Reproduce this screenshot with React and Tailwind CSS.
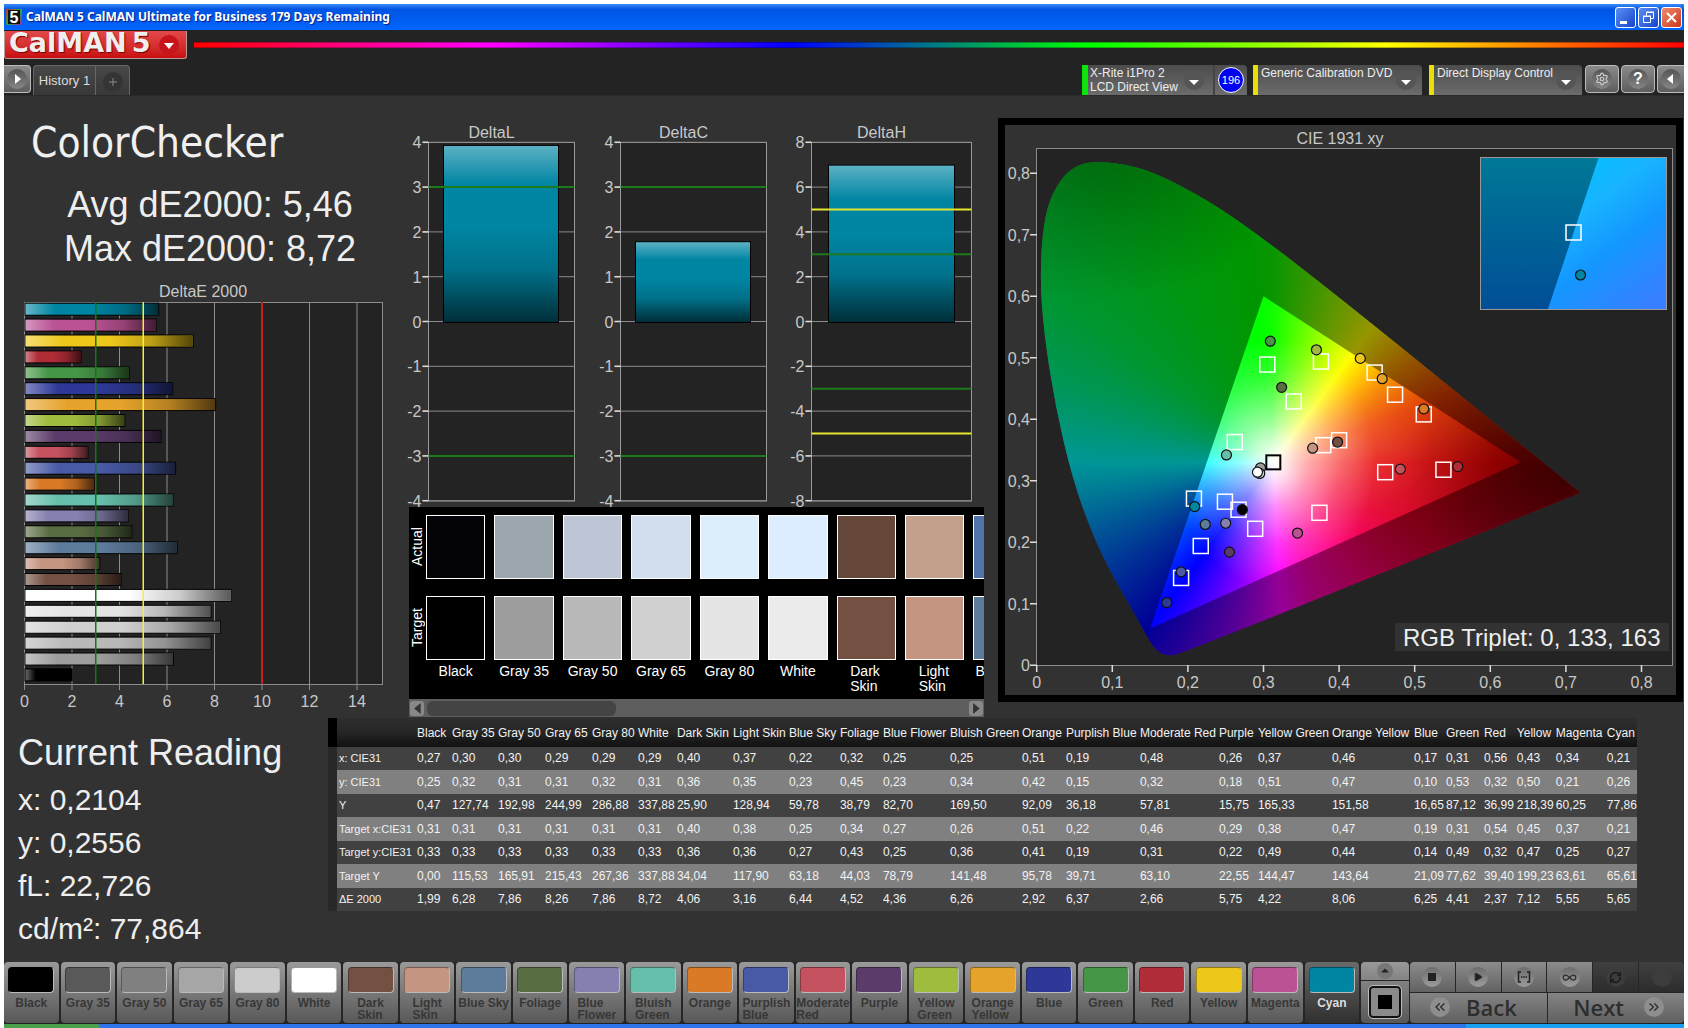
import { useState } from "react";
import {
  Play,
  Settings,
  Infinity as InfinityIcon,
  RefreshCw,
  ChevronsLeft,
  ChevronsRight,
} from "lucide-react";

// name, color, x, y, Y, target x, target y, target Y, dE2000, table column width
const PATCHES = [
  ["Black", "#000000", "0,27", "0,25", "0,47", "0,31", "0,33", "0,00", 1.99, 35],
  ["Gray 35", "#9d9d9d", "0,30", "0,32", "127,74", "0,31", "0,33", "115,53", 6.28, 46],
  ["Gray 50", "#b9b9b9", "0,30", "0,31", "192,98", "0,31", "0,33", "165,91", 7.86, 47],
  ["Gray 65", "#d0d0d0", "0,29", "0,31", "244,99", "0,31", "0,33", "215,43", 8.26, 47],
  ["Gray 80", "#e5e5e5", "0,29", "0,32", "286,88", "0,31", "0,33", "267,36", 7.86, 46],
  ["White", "#ffffff", "0,29", "0,31", "337,88", "0,31", "0,33", "337,88", 8.72, 39],
  ["Dark Skin", "#735041", "0,40", "0,36", "25,90", "0,40", "0,36", "34,04", 4.06, 56],
  ["Light Skin", "#c49580", "0,37", "0,35", "128,94", "0,38", "0,36", "117,90", 3.16, 56],
  ["Blue Sky", "#5d7b9b", "0,22", "0,23", "59,78", "0,25", "0,27", "63,18", 6.44, 51],
  ["Foliage", "#596d42", "0,32", "0,45", "38,79", "0,34", "0,43", "44,03", 4.52, 43],
  ["Blue Flower", "#8480b0", "0,25", "0,23", "82,70", "0,27", "0,25", "78,79", 4.36, 67],
  ["Bluish Green", "#66bfaa", "0,25", "0,34", "169,50", "0,26", "0,36", "141,48", 6.26, 72],
  ["Orange", "#da7a27", "0,51", "0,42", "92,09", "0,51", "0,41", "95,78", 2.92, 44],
  ["Purplish Blue", "#4859a6", "0,19", "0,15", "36,18", "0,22", "0,19", "39,71", 6.37, 74],
  ["Moderate Red", "#c4525f", "0,48", "0,32", "57,81", "0,46", "0,31", "63,10", 2.66, 79],
  ["Purple", "#5b3b69", "0,26", "0,18", "15,75", "0,29", "0,22", "22,55", 5.75, 39],
  ["Yellow Green", "#a0bc3e", "0,37", "0,51", "165,33", "0,38", "0,49", "144,47", 4.22, 74],
  ["Orange Yellow", "#e6a32b", "0,46", "0,47", "151,58", "0,47", "0,44", "143,64", 8.06, 82],
  ["Blue", "#2e3997", "0,17", "0,10", "16,65", "0,19", "0,14", "21,09", 6.25, 32],
  ["Green", "#469647", "0,31", "0,53", "87,12", "0,31", "0,49", "77,62", 4.41, 38],
  ["Red", "#b02d37", "0,56", "0,32", "36,99", "0,54", "0,32", "39,40", 2.37, 33],
  ["Yellow", "#edc81b", "0,43", "0,50", "218,39", "0,45", "0,47", "199,23", 7.12, 39],
  ["Magenta", "#ba5293", "0,34", "0,21", "60,25", "0,37", "0,25", "63,61", 5.55, 51],
  ["Cyan", "#0085a3", "0,21", "0,26", "77,86", "0,21", "0,27", "65,61", 5.65, 32],
];

// the pattern pads use the darker gray steps
const PAD_COLORS = {
  "Gray 35": "#595959",
  "Gray 50": "#808080",
  "Gray 65": "#a6a6a6",
  "Gray 80": "#cccccc",
};

const TABLE_ROWS = [
  ["x: CIE31", 2],
  ["y: CIE31", 3],
  ["Y", 4],
  ["Target x:CIE31", 5],
  ["Target y:CIE31", 6],
  ["Target Y", 7],
  ["ΔE 2000", 8],
];

const COMPARE = [
  ["Black", "#030308", "#000000"],
  ["Gray 35", "#9ba7ac", "#9d9d9d"],
  ["Gray 50", "#bec6d6", "#b9b9b9"],
  ["Gray 65", "#d2deee", "#d0d0d0"],
  ["Gray 80", "#dceefb", "#e5e5e5"],
  ["White", "#dcedff", "#ebebeb"],
  ["Dark Skin", "#654739", "#735041"],
  ["Light Skin", "#c3a08c", "#c49580"],
  ["Blue Sky", "#4f74aa", "#5d7b9b"],
];

const format = (n) => n.toFixed(2).replace(".", ",");

/* ---------- title bar and header ---------- */

function TitleBar() {
  return (
    <div className="flex h-[26px] items-center gap-1 bg-linear-to-b from-[#3a8cf8] via-[#0054e3] via-20% to-[#0066ff] px-[2px]">
      <svg viewBox="0 0 16 16" className="size-4">
        <defs>
          <linearGradient id="appIcon" x1="0" y1="0" x2="1" y2="1">
            <stop offset="0" stopColor="#c33" />
            <stop offset=".5" stopColor="#2a4" />
            <stop offset="1" stopColor="#a2a" />
          </linearGradient>
        </defs>
        <rect width="16" height="16" fill="url(#appIcon)" />
        <rect x="2" y="1" width="12" height="14" fill="#111" />
        <text x="8" y="14" textAnchor="middle" fontSize="16" fontWeight="700" fill="#fff" fontFamily="Liberation Sans, sans-serif">
          5
        </text>
      </svg>
      <span className="grow font-['Noto_Sans',sans-serif] text-[12px] font-bold text-white [text-shadow:1px_1px_1px_#0a1883]">
        CalMAN 5 CalMAN Ultimate for Business 179 Days Remaining
      </span>
      <div className="flex gap-[2px]">
        <button aria-label="Minimize" className="size-[21px] rounded-[3px] border border-white bg-linear-to-br from-[#5b8ff5] to-[#1941c8]">
          <svg viewBox="0 0 19 19">
            <rect x="4" y="13" width="7" height="3" fill="#fff" />
          </svg>
        </button>
        <button aria-label="Restore" className="size-[21px] rounded-[3px] border border-white bg-linear-to-br from-[#5b8ff5] to-[#1941c8]">
          <svg viewBox="0 0 19 19" fill="none" stroke="#fff">
            <path d="M7.500 7.500V4.500h7v6h-3M7 4h8M4.500 8.500h7v6h-7zM4 8h8" />
          </svg>
        </button>
        <button aria-label="Close" className="size-[21px] rounded-[3px] border border-white bg-linear-to-br from-[#f08a6c] to-[#c8341a]">
          <svg viewBox="0 0 19 19" fill="none" stroke="#fff" strokeWidth="2">
            <path d="M5 5l9 9M14 5l-9 9" />
          </svg>
        </button>
      </div>
    </div>
  );
}

function DropCircle() {
  return (
    <svg viewBox="0 0 20 20" className="size-5">
      <circle cx="10" cy="10" r="10" fill="#555" />
      <path d="M5 10h10l-5 5z" fill="#fff" />
    </svg>
  );
}

function SourceSelect({ label, value, className }) {
  return (
    <div className={`relative h-[30px] rounded-tr-[4px] border-l-[5px] border-[#e8e000] bg-linear-to-b from-[#4c4c4c] to-[#6c6c6c] ${className}`}>
      <select
        aria-label={label}
        defaultValue={value}
        className="block h-[16px] w-full appearance-none bg-transparent pl-[3px] text-[12px] leading-4 text-[#eee]"
      >
        <option>{value}</option>
      </select>
      <span className="pointer-events-none absolute top-[5px] right-[6px]">
        <DropCircle />
      </span>
    </div>
  );
}

function RoundButton({ label, children, className = "w-[34px]" }) {
  return (
    <button
      aria-label={label}
      className={`flex h-[28px] items-center justify-center rounded-[4px] border border-[#bbb] bg-linear-to-b from-[#8a8a8a] to-[#5e5e5e] ${className}`}
    >
      <span className="flex size-5 items-center justify-center rounded-full bg-linear-to-b from-[#555] to-[#868686] text-white">
        {children}
      </span>
    </button>
  );
}

function Header() {
  return (
    <header className="border-b border-[#2a2a2a] bg-[#232323]">
      <div className="flex h-[35px] items-start gap-[7px] pt-px">
        <button
          aria-label="CalMAN 5 menu"
          className="flex h-[28px] w-[183px] items-center rounded-b-[3px] border-x border-b border-[#b99] bg-linear-to-b from-[#e34848] to-[#c80c10] pl-1 font-['DejaVu_Sans',sans-serif] text-[27px] leading-[24px] font-bold text-[#f1eeee] [text-shadow:1px_1px_1px_#700]"
        >
          <span className="-mt-1">CalMAN</span>
          <span className="-mt-1 ml-[5px]">5</span>
          <svg viewBox="0 0 20 20" className="ml-[9px] size-5">
            <circle cx="10" cy="10" r="10" fill="#c8141c" />
            <path d="M5 8h10l-5 6z" fill="#fff" />
          </svg>
        </button>
        <div className="mt-[11px] h-[6px] grow border-y border-black/30 bg-[linear-gradient(90deg,#f00,#f0f_20%,#00f_40%,#0f0_60%,#ff0_80%,#f00)]" />
      </div>

      <div className="flex h-[30px] items-start">
        <RoundButton label="Expand" className="w-[27px] rounded-l-none border-l-0">
          <svg viewBox="0 0 20 20">
            <path d="M8 5v10l6-5z" fill="#fff" />
          </svg>
        </RoundButton>
        <div className="ml-[2px] flex h-[30px] rounded-t-[4px] border border-b-0 border-[#666] bg-linear-to-b from-[#484848] to-[#383838]">
          <button className="w-[62px] border-r border-[#666] pt-px text-[13px] text-[#ddd]">History 1</button>
          <button aria-label="Add history" className="flex w-[33px] items-center justify-center pt-[2px]">
            <svg viewBox="0 0 20 20" className="size-5">
              <circle cx="10" cy="10" r="10" fill="#343434" />
              <path d="M10 6v8M6 10h8" stroke="#888" />
            </svg>
          </button>
        </div>

        <div className="grow" />

        <div className="flex h-[30px] w-[165px] rounded-tr-[4px] border-l-[6px] border-[#0ae40a] bg-linear-to-b from-[#4c4c4c] to-[#6c6c6c]">
          <button className="flex grow items-center justify-between border-r-2 border-[#444] pr-[9px] pl-[2px] text-left text-[12px] leading-[14px] text-[#eee]">
            <span>
              X-Rite i1Pro 2
              <br />
              LCD Direct View
            </span>
            <DropCircle />
          </button>
          <div className="flex w-[32px] items-center justify-center">
            <span className="flex size-[26px] items-center justify-center rounded-full border border-white bg-[#0000f4] text-[11px] text-white">
              196
            </span>
          </div>
        </div>
        <SourceSelect label="Source" value="Generic Calibration DVD" className="ml-[6px] w-[169px]" />
        <SourceSelect label="Display" value="Direct Display Control" className="ml-[7px] w-[153px]" />
        <div className="ml-[3px] flex gap-[2px]">
          <RoundButton label="Settings">
            <Settings size={14} color="#ccc" />
          </RoundButton>
          <RoundButton label="Help">
            <span className="text-[16px] font-bold">?</span>
          </RoundButton>
          <RoundButton label="Collapse" className="w-[27px] rounded-r-none border-r-0">
            <svg viewBox="0 0 20 20">
              <path d="M12 5v10l-6-5z" fill="#fff" />
            </svg>
          </RoundButton>
        </div>
      </div>
    </header>
  );
}

/* ---------- charts ---------- */

function DeltaEChart() {
  const unit = 23.75;
  const bars = [...PATCHES].reverse();
  return (
    <svg viewBox="0 0 400 432" className="w-full text-[16px]" fill="#c8c8c8">
      <defs>
        <linearGradient id="shadeX">
          <stop offset="0" stopColor="#fff" stopOpacity=".4" />
          <stop offset=".22" stopColor="#fff" stopOpacity="0" />
          <stop offset=".5" stopColor="#000" stopOpacity="0" />
          <stop offset=".75" stopColor="#000" stopOpacity=".2" />
          <stop offset="1" stopColor="#000" stopOpacity=".65" />
        </linearGradient>
      </defs>
      <text x="199" y="15" textAnchor="middle">DeltaE 2000</text>
      <rect x="20.500" y="20.500" width="358" height="382" fill="#232323" stroke="#8c8c8c" />
      {[0, 2, 4, 6, 8, 10, 12, 14].map((v) => (
        <g key={v}>
          <path d={`M${20.5 + v * unit} 20v388`} stroke="#8c8c8c" />
          <text x={20.5 + v * unit} y="425" textAnchor="middle">{v}</text>
        </g>
      ))}
      {bars.map((p, i) => (
        <g key={p[0]}>
          <rect x="21" y={21.2 + i * 15.9} width={p[8] * 23.65} height="12" fill={p[1]} stroke="#000" />
          <rect x="21.500" y={21.7 + i * 15.9} width={p[8] * 23.65 - 1} height="11" fill="url(#shadeX)" />
        </g>
      ))}
      <path d={`M${20.5 + 3 * unit} 20v382`} stroke="#0f7a0f" strokeWidth="1.500" />
      <path d={`M${20.5 + 5 * unit} 20v382`} stroke="#f2f23a" strokeWidth="1.500" />
      <path d={`M${20.5 + 10 * unit} 20v382`} stroke="#c81e1e" strokeWidth="2" />
    </svg>
  );
}

function DeltaPlot({ title, left, width, max, value, barX, barWidth, greens, yellows = [] }) {
  const zero = 199.5;
  const step = 44.8;
  const scale = step / (max / 4);
  const top = zero - value * scale;
  return (
    <g>
      <text x={left + width / 2 - 10} y="16" textAnchor="middle">{title}</text>
      <rect x={left} y="20.500" width={width} height="358.500" fill="#232323" stroke="#9a9a9a" />
      {[4, 3, 2, 1, 0, -1, -2, -3, -4].map((n) => (
        <g key={n}>
          <path d={`M${left - 6} ${zero - n * step}h${width + 6}`} stroke="#8c8c8c" />
          <path d={`M${left - 6} ${zero - n * step}h6`} stroke="#ddd" strokeWidth="1.500" />
          <text x={left - 7} y={zero + 6 - n * step} textAnchor="end">{(n * max) / 4}</text>
        </g>
      ))}
      <rect x={barX} y={top} width={barWidth} height={zero - top + 1} fill="#0085a3" stroke="#000" />
      <rect x={barX + 0.5} y={top + 0.5} width={barWidth - 1} height={zero - top} fill="url(#shadeY)" />
      {greens.map((g) => (
        <path key={g} d={`M${left} ${zero - g * scale}h${width}`} stroke="#1c7a1c" strokeWidth="2" />
      ))}
      {yellows.map((g) => (
        <path key={g} d={`M${left} ${zero - g * scale}h${width}`} stroke="#e6e62e" strokeWidth="2" />
      ))}
    </g>
  );
}

function DeltaCharts() {
  return (
    <svg viewBox="0 0 584 385" className="w-full text-[16px]" fill="#c8c8c8">
      <defs>
        <linearGradient id="shadeY" x1="0" y1="0" x2="0" y2="1">
          <stop offset="0" stopColor="#fff" stopOpacity=".36" />
          <stop offset=".22" stopColor="#fff" stopOpacity="0" />
          <stop offset=".45" stopColor="#000" stopOpacity="0" />
          <stop offset=".7" stopColor="#000" stopOpacity=".15" />
          <stop offset="1" stopColor="#000" stopOpacity=".65" />
        </linearGradient>
      </defs>
      <DeltaPlot title="DeltaL" left={24.5} width={146} max={4} value={3.93} barX={39.5} barWidth={115} greens={[3, -3]} />
      <DeltaPlot title="DeltaC" left={216.5} width={146} max={4} value={1.78} barX={231.5} barWidth={115} greens={[3, -3]} />
      <DeltaPlot title="DeltaH" left={407.5} width={160} max={8} value={6.98} barX={424.5} barWidth={126} greens={[3, -3]} yellows={[5, -5]} />
    </svg>
  );
}

function SwatchCompare() {
  return (
    <div className="mr-1 ml-[5px]">
      <div className="flex h-[192px] overflow-hidden bg-black pt-2 text-[14px] leading-[15px] text-white">
        <div className="flex w-[17px] shrink-0 flex-col items-center gap-[17px]">
          <span className="h-16 rotate-180 text-center [writing-mode:vertical-rl]">Actual</span>
          <span className="h-16 rotate-180 text-center [writing-mode:vertical-rl]">Target</span>
        </div>
        {COMPARE.map(([name, actual, target]) => (
          <div key={name} className="flex w-[11.9%] shrink-0 flex-col gap-[17px] pr-[9px]">
            <div className="h-16 border border-white" style={{ backgroundColor: actual }} />
            <div className="h-16 border border-white" style={{ backgroundColor: target }} />
            <div className="-mt-[13px] flex justify-center">
              <span className={name.endsWith("Skin") ? "w-8" : "whitespace-nowrap"}>{name}</span>
            </div>
          </div>
        ))}
      </div>
      <div className="flex h-[18px] items-center gap-[3px] bg-[#5e5e5e] px-px">
        <button aria-label="Scroll left" className="flex h-[15px] w-[14px] items-center justify-center rounded-[3px] bg-[#888]">
          <svg viewBox="0 0 8 10" className="h-[11px]">
            <path d="M7 0v10L1 5z" fill="#333" />
          </svg>
        </button>
        <div className="h-[15px] w-[33%] rounded-[6px] bg-[#444]" />
        <div className="grow" />
        <button aria-label="Scroll right" className="flex h-[15px] w-[14px] items-center justify-center rounded-[3px] bg-[#888]">
          <svg viewBox="0 0 8 10" className="h-[11px]">
            <path d="M1 0v10l6-5z" fill="#333" />
          </svg>
        </button>
      </div>
    </div>
  );
}

/* ---------- CIE diagram ---------- */

const cx = (x) => 31.7 + x * 756;
const cy = (y) => 540.3 - y * 615;

const LOCUS = [
  [0.1726, 0.0155], [0.16, 0.022], [0.15, 0.038], [0.137, 0.067], [0.115, 0.115],
  [0.096, 0.156], [0.073, 0.215], [0.047, 0.305], [0.025, 0.42], [0.0095, 0.54],
  [0.004, 0.64], [0.011, 0.74], [0.033, 0.795], [0.058, 0.816], [0.0854, 0.819],
  [0.12, 0.814], [0.16, 0.799], [0.2296, 0.7543], [0.3016, 0.6923], [0.3731, 0.6245],
  [0.4441, 0.5547], [0.5125, 0.4866], [0.627, 0.3725], [0.719, 0.2806], [0.719, 0.2806],
  [0.19, 0.018],
];

// rounds the polygon by running quadratic curves through the edge midpoints
function smooth(points) {
  const p = points.map(([x, y]) => [cx(x), cy(y)]);
  const mid = (a, b) => `${(a[0] + b[0]) / 2} ${(a[1] + b[1]) / 2}`;
  let d = `M${mid(p[p.length - 1], p[0])}`;
  p.forEach((pt, i) => {
    d += `Q${pt[0]} ${pt[1]} ${mid(pt, p[(i + 1) % p.length])}`;
  });
  return d + "Z";
}

const TRIANGLE = `M${cx(0.3)} ${cy(0.6)}L${cx(0.64)} ${cy(0.33)}L${cx(0.15)} ${cy(0.06)}Z`;

const TARGETS = [
  [0.305, 0.489], [0.376, 0.494], [0.34, 0.429], [0.447, 0.476], [0.474, 0.44],
  [0.512, 0.408], [0.262, 0.363], [0.379, 0.358], [0.4, 0.366], [0.461, 0.314],
  [0.538, 0.318], [0.208, 0.271], [0.249, 0.266], [0.267, 0.253], [0.289, 0.222],
  [0.374, 0.248], [0.217, 0.194], [0.191, 0.142],
];

const READINGS = [
  [0.309, 0.527, "#469647"], [0.37, 0.513, "#a0bc3e"], [0.324, 0.452, "#596d42"],
  [0.428, 0.499, "#edc81b"], [0.457, 0.466, "#e6a32b"], [0.512, 0.417, "#da7a27"],
  [0.251, 0.342, "#66bfaa"], [0.365, 0.353, "#c49580"], [0.398, 0.363, "#735041"],
  [0.481, 0.319, "#c4525f"], [0.557, 0.323, "#b02d37"], [0.209, 0.258, "#0085a3"],
  [0.223, 0.229, "#5d7b9b"], [0.25, 0.231, "#8480b0"], [0.272, 0.253, "#000000"],
  [0.345, 0.215, "#ba5293"], [0.255, 0.184, "#5b3b69"], [0.191, 0.152, "#4859a6"],
  [0.172, 0.102, "#2e3997"], [0.296, 0.321, "#9d9d9d"], [0.295, 0.312, "#d0d0d0"],
  [0.292, 0.314, "#ffffff"],
];

function CieDiagram() {
  const locus = smooth(LOCUS);
  return (
    <svg viewBox="0 0 671 570" className="w-full bg-[#323232] text-[16px]" fill="#c8c8c8">
      <defs>
        <clipPath id="locus"><path d={locus} /></clipPath>
        <clipPath id="gamut"><path d={TRIANGLE} /></clipPath>
        <clipPath id="inset"><rect x="475" y="33" width="187" height="151" /></clipPath>
        <radialGradient id="white">
          <stop offset="0" stopColor="#fff" />
          <stop offset=".12" stopColor="#fff" stopOpacity=".85" />
          <stop offset=".35" stopColor="#fff" stopOpacity=".5" />
          <stop offset=".65" stopColor="#fff" stopOpacity=".2" />
          <stop offset="1" stopColor="#fff" stopOpacity="0" />
        </radialGradient>
        <radialGradient id="dim">
          <stop offset="0" stopColor="#000" stopOpacity=".48" />
          <stop offset=".4" stopColor="#000" stopOpacity=".3" />
          <stop offset="1" stopColor="#000" stopOpacity="0" />
        </radialGradient>
        <linearGradient id="insetOut" x1="0" y1="0" x2="0" y2="1">
          <stop offset="0" stopColor="#007896" />
          <stop offset="1" stopColor="#004e96" />
        </linearGradient>
        <linearGradient id="insetIn" x1=".2" y1="0" x2=".8" y2="1">
          <stop offset="0" stopColor="#00c0ff" />
          <stop offset=".3" stopColor="#18b4ff" />
          <stop offset=".6" stopColor="#1496ff" />
          <stop offset="1" stopColor="#3880ff" />
        </linearGradient>
      </defs>

      <text x="335" y="19" textAnchor="middle">CIE 1931 xy</text>
      <rect x="31.500" y="23.500" width="636" height="517" fill="#232323" stroke="#8c8c8c" />

      {/* hue wheel around D65, cut to the spectral locus */}
      <g clipPath="url(#locus)">
        <foreignObject x="31" y="24" width="636" height="516">
          <div className="h-full w-full bg-[conic-gradient(at_237px_314px,#1f0_0deg,#8f0_18deg,#ff0_36deg,#ffa800_50deg,#ff4a00_68deg,#f00_90deg,#ff0032_114deg,#ff0078_142deg,#ff00b8_164deg,#f0f_177deg,#8200ff_196deg,#00f_217deg,#0050ff_235deg,#0096ff_250deg,#0ff_270deg,#00ff96_290deg,#00ff50_308deg,#0f2_330deg,#0f0_354deg,#1f0_360deg)]" />
        </foreignObject>
        <path d={`M0 0H671V570H0Z${TRIANGLE}`} fillRule="evenodd" fillOpacity=".41" fill="#000" />
        <ellipse cx={cx(0.08)} cy={cy(0.9)} rx="220" ry="190" fill="url(#dim)" opacity=".75" />
        <ellipse cx={cx(0.7)} cy={cy(0.3)} rx="250" ry="170" fill="url(#dim)" opacity=".9" />
        <ellipse cx={cx(0.68)} cy={cy(0.32)} rx="150" ry="110" fill="url(#dim)" opacity=".6" />
      </g>
      <g clipPath="url(#gamut)">
        <ellipse cx={cx(0.315)} cy={cy(0.329)} rx="100" ry="124" fill="url(#white)" />
        <ellipse cx={cx(0.37)} cy={cy(0.34)} rx="180" ry="90" fill="url(#white)" opacity=".35" />
      </g>

      {[0, 1, 2, 3, 4, 5, 6, 7, 8].map((n) => (
        <g key={n}>
          <path d={`M${cx(n / 10)} 540v7M25 ${cy(n / 10)}h7`} stroke="#ddd" strokeWidth="1.500" />
          <text x={cx(n / 10)} y="563" textAnchor="middle">{n ? `0,${n}` : 0}</text>
          <text x="25" y={cy(n / 10) + 6} textAnchor="end">{n ? `0,${n}` : 0}</text>
        </g>
      ))}

      {TARGETS.map(([x, y]) => (
        <rect key={`${x}-${y}`} x={cx(x) - 7.5} y={cy(y) - 7.5} width="15" height="15" fill="none" stroke="#fff" strokeWidth="1.500" />
      ))}
      <rect x={cx(0.313) - 7} y={cy(0.33) - 7} width="14" height="14" fill="none" stroke="#000" strokeWidth="2" />
      {READINGS.map(([x, y, fill]) => (
        <circle key={fill + x} cx={cx(x)} cy={cy(y)} r="5" fill={fill} stroke="#111" strokeWidth="1.200" />
      ))}

      {/* magnified view of the selected patch */}
      <g clipPath="url(#inset)">
        <rect x="475" y="33" width="187" height="151" fill="url(#insetOut)" />
        <path d="M593.500 33H662V184H543Z" fill="url(#insetIn)" />
      </g>
      <rect x="475.500" y="32.500" width="186" height="152" fill="none" stroke="#999" />
      <rect x="561" y="100" width="15" height="15" fill="none" stroke="#fff" strokeWidth="1.500" />
      <circle cx="575.500" cy="150" r="5" fill="#0085a3" stroke="#111" strokeWidth="1.200" />

      <rect x="390" y="498" width="274" height="28" fill="#323232" />
      <text x="398" y="521" fill="#eee" className="text-[24px]">RGB Triplet: 0, 133, 163</text>
    </svg>
  );
}

/* ---------- readings and data table ---------- */

function CurrentReading() {
  return (
    <section className="pt-[13px] pl-[14px] text-[30px] leading-[43px] text-[#eee]">
      <h2 className="text-[36px] leading-[43px]">Current Reading</h2>
      <p className="mt-1">x: 0,2104</p>
      <p>y: 0,2556</p>
      <p>fL: 22,726</p>
      <p>cd/m²: 77,864</p>
    </section>
  );
}

function DataTable() {
  const total = 80 + PATCHES.reduce((sum, p) => sum + p[9], 0);
  return (
    <table className="w-full table-fixed border-collapse text-left text-[12px] whitespace-nowrap text-[#f2f2f2]">
      <colgroup>
        <col className="w-[9px]" />
        <col style={{ width: `${(78 / total) * 100}%` }} />
        {PATCHES.map((p) => (
          <col key={p[0]} style={{ width: `${(p[9] / total) * 100}%` }} />
        ))}
      </colgroup>
      <thead>
        <tr className="h-[29px] bg-linear-to-b from-[#2e2e2e] via-[#262626] via-48% to-[#111]">
          <td className="bg-black" />
          <td />
          {PATCHES.map((p) => (
            <th key={p[0]} scope="col" className="p-0 pl-[2px] font-normal">{p[0]}</th>
          ))}
        </tr>
      </thead>
      <tbody>
        {TABLE_ROWS.map(([label, key]) => (
          <tr key={label} className="h-[23px] bg-[#414141] leading-[23px] even:h-[24px] even:bg-[#808080]">
            <td className="bg-[#282828]" />
            <th scope="row" className="p-0 pl-[2px] text-[11px] font-normal">{label}</th>
            {PATCHES.map((p) => (
              <td key={p[0]} className="p-0 pl-[2px]">
                {key === 8 ? format(p[8]) : p[key]}
              </td>
            ))}
          </tr>
        ))}
      </tbody>
    </table>
  );
}

/* ---------- footer ---------- */

function PatternPad({ name, color, active, onClick }) {
  return (
    <button
      onClick={onClick}
      className={`flex h-[61px] min-w-0 flex-1 flex-col items-center rounded-[4px] bg-linear-to-b pt-[5px] text-[12px] leading-3 font-bold ${
        active ? "from-[#6a6a6a] to-[#303030] text-[#ddd]" : "from-[#9a9a9a] to-[#585858] text-[#373737]"
      }`}
    >
      <span
        className="mb-[4px] h-[26px] w-[46px] shrink-0 rounded-[4px] border border-t-black/40 border-r-[#bbb] border-b-[#bbb] border-l-black/30"
        style={{ backgroundColor: color }}
      />
      <span className={`text-left ${name.includes(" ") && !/Gray|Sky/.test(name) ? "w-min" : "whitespace-nowrap"}`}>{name}</span>
    </button>
  );
}

function TransportButton({ label, disabled, children }) {
  return (
    <button
      aria-label={label}
      disabled={disabled}
      className="flex h-[30px] flex-1 items-center justify-center bg-linear-to-b from-[#8c8c8c] to-[#626262] text-[#2e2e2e] disabled:from-[#404040] disabled:to-[#2c2c2c] disabled:text-[#1c1c1c]"
    >
      <span className={`flex size-5 items-center justify-center rounded-full ${disabled ? "bg-[#3c3c3c]" : "bg-linear-to-b from-[#6c6c6c] to-[#9c9c9c]"}`}>
        {children}
      </span>
    </button>
  );
}

function Footer() {
  const [selected, setSelected] = useState("Cyan");
  return (
    <footer>
      <div className="flex gap-px border-b border-[#222] bg-[#262626]">
        <div className="flex min-w-0 grow gap-[2px]">
          {PATCHES.map((p) => (
            <PatternPad
              key={p[0]}
              name={p[0]}
              color={PAD_COLORS[p[0]] ?? p[1]}
              active={selected === p[0]}
              onClick={() => setSelected(p[0])}
            />
          ))}
        </div>
        <div className="ml-px flex w-[48px] flex-col gap-px">
          <button aria-label="More patterns" className="flex h-[18px] items-center justify-center rounded-t-[4px] bg-linear-to-b from-[#999] to-[#848484]">
            <svg viewBox="0 0 16 16" className="size-4">
              <circle cx="8" cy="8" r="8" fill="#777" />
              <path d="M4 9.500h8L8 5.500z" fill="#222" />
            </svg>
          </button>
          <button aria-label="Pattern window" className="flex h-[42px] items-center justify-center rounded-b-[4px] bg-linear-to-b from-[#828282] to-[#585858]">
            <span className="flex size-8 items-center justify-center rounded-[4px] border-2 border-[#111] bg-[#8a8a8a] outline outline-[#bbb]">
              <span className="size-[14px] bg-black" />
            </span>
          </button>
        </div>
        <div className="flex w-[274px] flex-col gap-px">
          <div className="flex gap-px overflow-hidden rounded-t-[4px]">
            <TransportButton label="Stop">
              <span className="size-2 bg-[#222]" />
            </TransportButton>
            <TransportButton label="Play">
              <Play size={10} fill="#222" />
            </TransportButton>
            <TransportButton label="Read series">
              <svg viewBox="0 0 14 14" className="size-[14px]" fill="none" stroke="#222" strokeWidth="1.500">
                <path d="M4 2H1.500v10H4M10 2h2.500v10H10M4 7h1.500M6.300 7h1.500M8.600 7h1.500" />
              </svg>
            </TransportButton>
            <TransportButton label="Read continuous">
              <InfinityIcon size={15} />
            </TransportButton>
            <TransportButton label="Refresh" disabled>
              <RefreshCw size={13} strokeWidth={3} />
            </TransportButton>
            <TransportButton label="Record" disabled />
          </div>
          <div className="flex gap-px overflow-hidden rounded-b-[4px] font-['Open_Sans',sans-serif] text-[22px] leading-[28px] font-semibold text-[#2e2e2e]">
            <button className="flex h-[30px] flex-1 items-center gap-4 bg-linear-to-b from-[#848484] to-[#606060] pb-[2px] pl-5">
              <span className="flex size-5 items-center justify-center rounded-full bg-[#8e8e8e]">
                <ChevronsLeft size={16} />
              </span>
              Back
            </button>
            <button className="flex h-[30px] flex-1 items-center justify-end gap-5 bg-linear-to-b from-[#848484] to-[#606060] pr-5 pb-[2px]">
              Next
              <span className="flex size-5 items-center justify-center rounded-full bg-[#8e8e8e]">
                <ChevronsRight size={16} />
              </span>
            </button>
          </div>
        </div>
      </div>
      {/* sliver of the taskbar */}
      <div className="flex h-1 bg-[#2f74e8]">
        <div className="w-[96px] rounded-tr-[4px] bg-[#4ba04b]" />
        <div className="grow" />
        <div className="w-[13%] bg-[#18a0f0]" />
      </div>
    </footer>
  );
}

export default function App() {
  return (
    <div className="flex min-h-screen flex-col bg-white px-1 pt-1 font-['Liberation_Sans',Arial,sans-serif]">
      <TitleBar />
      <Header />
      <main className="grow bg-[#323232]">
        <div className="grid grid-cols-[400fr_584fr_696fr]">
          <section>
            <h1 className="pt-[19px] pl-[27px] font-['DejaVu_Sans_Condensed','DejaVu_Sans',sans-serif] text-[42px] leading-[56px] text-[#f0f0f0]">
              ColorChecker
            </h1>
            <div className="mt-[12px] mb-[11px] pl-[12px] text-center text-[36px] leading-[44px] text-[#eee]">
              <p>Avg dE2000: 5,46</p>
              <p>Max dE2000: 8,72</p>
            </div>
            <DeltaEChart />
          </section>
          <section className="pt-[26px]">
            <DeltaCharts />
            <SwatchCompare />
          </section>
          <section className="pt-[22px] pr-px pl-[10px]">
            <div className="border-[7px] border-black">
              <CieDiagram />
            </div>
          </section>
        </div>
        <div className="mt-px grid grid-cols-[324fr_1309fr_47fr] items-start">
          <CurrentReading />
          <DataTable />
        </div>
      </main>
      <Footer />
    </div>
  );
}
